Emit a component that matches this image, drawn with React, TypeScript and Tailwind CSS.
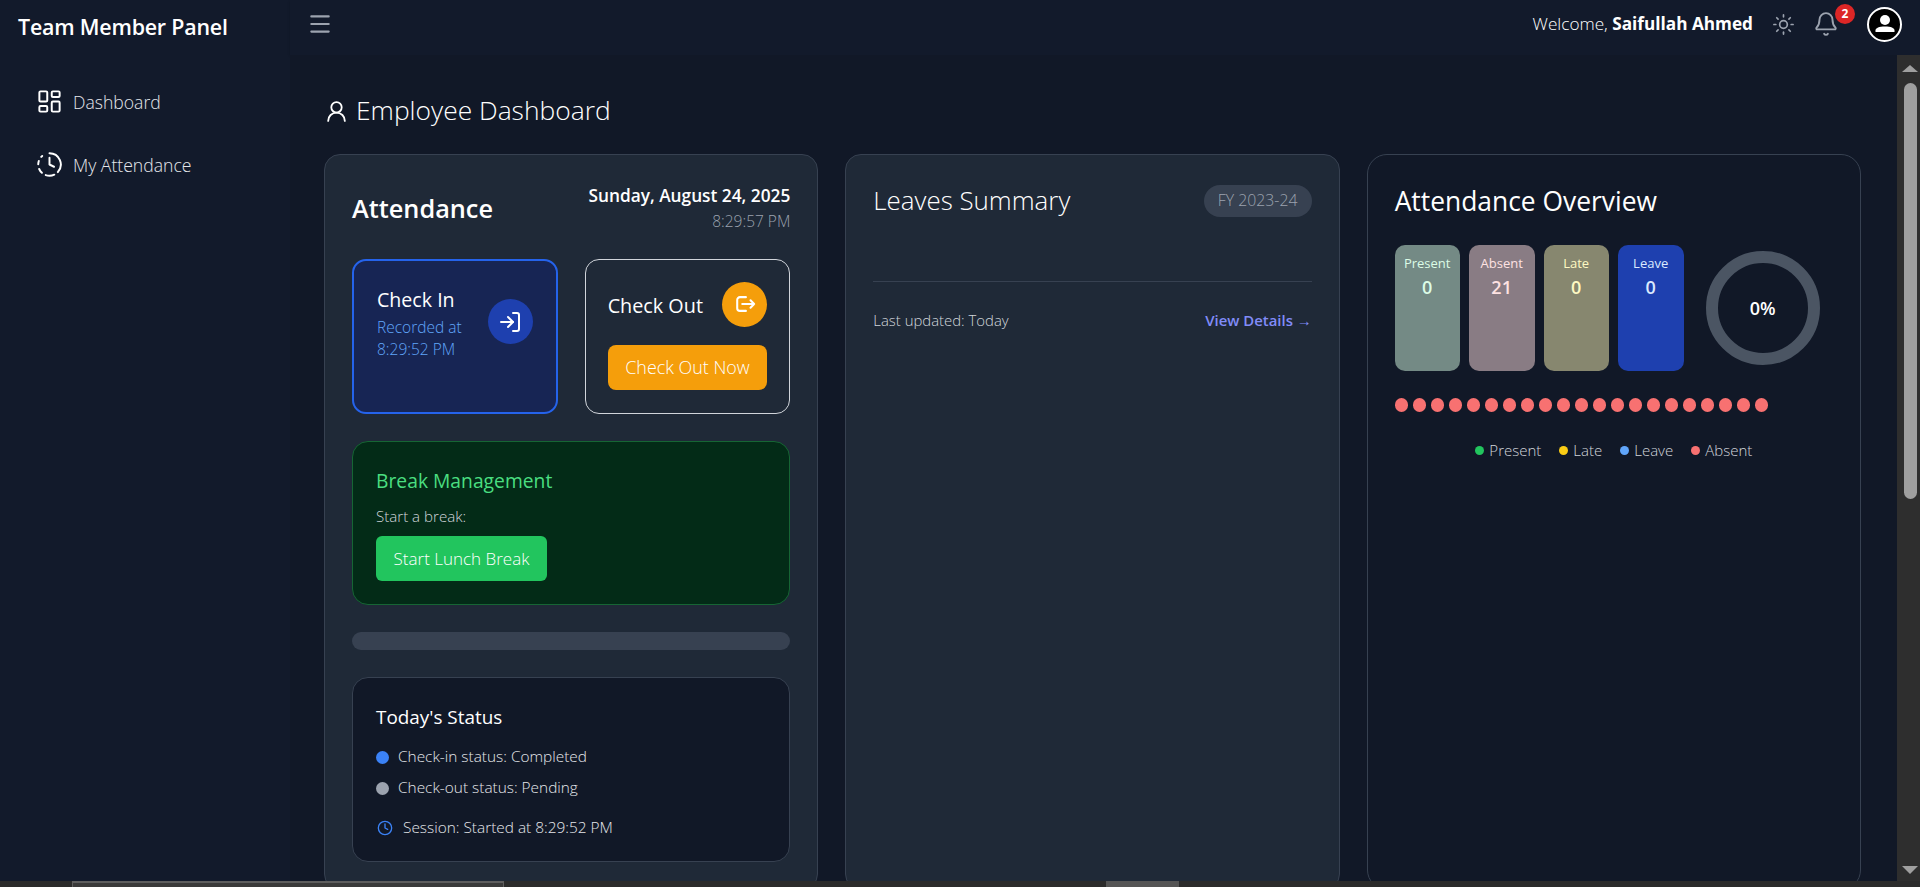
import { Bell, Clock, ClockFading, LayoutDashboard, LogIn, Menu, Sun, UserRound } from 'lucide-react';

const stats = [
  { label: 'Present', value: '0', tile: 'bg-[#748a85] text-[#dcfce7] w-[65px]' },
  { label: 'Absent', value: '21', tile: 'bg-[#897c84] text-[#fee2e2] w-[66px]' },
  { label: 'Late', value: '0', tile: 'bg-[#87876f] text-[#fef9c3] w-[65px]' },
  { label: 'Leave', value: '0', tile: 'bg-[#1e40af] text-[#dbeafe] w-[66px]' },
];

const legend = [
  { label: 'Present', dot: 'bg-[#22c55e]' },
  { label: 'Late', dot: 'bg-[#facc15]' },
  { label: 'Leave', dot: 'bg-[#60a5fa]' },
  { label: 'Absent', dot: 'bg-[#f87171]' },
];

const days = Array.from({ length: 21 }, (_, i) => i);

function Sidebar() {
  return (
    <aside className="w-[290px] shrink-0 bg-[#121a2b]">
      <div className="h-[55px] pl-[18px] pt-[12px] text-[21.4px] leading-[30px] font-semibold text-white tracking-[-0.2px]">
        Team Member Panel
      </div>
      <nav className="pl-[36px] pt-[33px] flex flex-col gap-[36px] text-[17.6px] leading-[26px] font-light text-gray-200">
        <a className="flex items-center gap-[10px]">
          <LayoutDashboard className="w-[27px] h-[27px] text-white" strokeWidth={1.75} />
          Dashboard
        </a>
        <a className="flex items-center gap-[10px]">
          <ClockFading className="w-[27px] h-[27px] text-white" strokeWidth={1.75} />
          My Attendance
        </a>
      </nav>
    </aside>
  );
}

function Header() {
  return (
    <header className="h-[55px] flex items-start justify-between bg-[#121a2b] shadow-sm">
      <Menu className="ml-[17px] mt-[11px] w-[26px] h-[26px] text-[#9ca3af]" strokeWidth={2} />
      <div className="flex items-center h-[48px] pr-[18px]">
        <span className="text-[17.2px] font-light text-white">
          Welcome, <strong className="font-bold">Saifullah Ahmed</strong>
        </span>
        <Sun className="ml-[19px] w-[23px] h-[23px] text-[#9ca3af]" strokeWidth={1.75} />
        <div className="relative ml-[18px] mr-[28px]">
          <Bell className="w-[26px] h-[26px] text-[#9ca3af]" strokeWidth={1.75} />
          <span className="absolute -top-[7px] -right-[16px] w-[20px] h-[20px] rounded-full bg-[#dc2626] text-white text-[12px] font-bold flex items-center justify-center">
            2
          </span>
        </div>
        <div className="w-[35px] h-[35px] rounded-full border-2 border-white bg-black flex items-center justify-center">
          <svg viewBox="0 0 24 24" className="w-[24px] h-[24px] fill-white">
            <circle cx="12" cy="8" r="5" />
            <path d="M2.5 20v-1.5C2.5 16 6 14.5 12 14.5s9.5 1.5 9.5 4V20z" />
          </svg>
        </div>
      </div>
    </header>
  );
}

function AttendanceCard() {
  return (
    <section className="bg-[#1f2937] border border-[#374151] rounded-[16px] px-[27px] pt-[27px] pb-[27px]">
      <div className="flex items-start justify-between">
        <h2 className="text-[25.3px] leading-[34px] font-semibold text-white mt-[9px]">Attendance</h2>
        <div className="text-right">
          <div className="text-[17.3px] leading-[28px] font-semibold text-white">Sunday, August 24, 2025</div>
          <div className="text-[15.5px] leading-[22px] font-light text-[#9ca3af]">8:29:57 PM</div>
        </div>
      </div>

      <div className="grid grid-cols-2 gap-[27px] mt-[27px]">
        <div className="h-[155px] rounded-[14px] border-2 border-[#2563eb] bg-[#172554] pl-[23px] pr-[23px] pt-[24px]">
          <div className="flex items-center justify-between">
            <div>
              <div className="text-[19.6px] leading-[30px] font-medium text-white">Check In</div>
              <div className="mt-[1px] text-[15.5px] leading-[22px] font-light text-[#60a5fa] w-[100px]">Recorded at 8:29:52 PM</div>
            </div>
            <div className="-mt-[2px] w-[45px] h-[45px] rounded-full bg-[#1e40af] flex items-center justify-center">
              <LogIn className="w-[24px] h-[24px] text-white" />
            </div>
          </div>
        </div>

        <div className="h-[155px] rounded-[14px] border border-[#d1d5db] pl-[22px] pr-[22px] pt-[22px]">
          <div className="flex items-center justify-between">
            <span className="mt-[3px] text-[19.8px] font-medium text-white">Check Out</span>
            <div className="w-[45px] h-[45px] rounded-full bg-[#f59e0b] flex items-center justify-center">
              <svg viewBox="0 0 24 24" className="w-[22px] h-[22px] -mt-[1px] fill-none stroke-white stroke-[2.25]" strokeLinecap="round" strokeLinejoin="round">
                <path d="M13 4.5H6.5a3 3 0 0 0-3 3v9a3 3 0 0 0 3 3H13" />
                <path d="M9 12h13M18 8l4 4-4 4" />
              </svg>
            </div>
          </div>
          <button className="mt-[18px] w-full h-[45px] rounded-[8px] bg-[#f59e0b] text-[17.9px] font-light text-white">
            Check Out Now
          </button>
        </div>
      </div>

      <div className="mt-[27px] h-[164px] rounded-[16px] border border-[#166534] bg-[#032b17] px-[23px] pt-[21px]">
        <h3 className="text-[19.3px] leading-[36px] font-medium text-[#4ade80]">Break Management</h3>
        <p className="mt-[6px] text-[15.1px] leading-[22px] font-light text-[#d1d5db]">Start a break:</p>
        <button className="mt-[9px] h-[45px] w-[171px] rounded-[6px] bg-[#22c55e] text-[17px] font-light text-white">
          Start Lunch Break
        </button>
      </div>

      <div className="mt-[27px] h-[18px] rounded-full bg-[#374151]" />

      <div className="mt-[27px] h-[185px] rounded-[16px] border border-[#374151] bg-[#111827] px-[23px] pt-[24px]">
        <h3 className="text-[18.9px] leading-[30px] font-medium text-white">Today's Status</h3>
        <div className="mt-[9px] flex items-center gap-[9px] text-[15.4px] leading-[32px] font-light text-[#e5e7eb]">
          <span className="w-[13px] h-[13px] rounded-full bg-[#3b82f6]" />
          Check-in status: Completed
        </div>
        <div className="flex items-center gap-[9px] text-[15.4px] leading-[30px] font-light text-[#e5e7eb]">
          <span className="w-[13px] h-[13px] rounded-full bg-[#9ca3af]" />
          Check-out status: Pending
        </div>
        <div className="mt-[14px] flex items-center gap-[10px] text-[15.4px] leading-[22px] font-light text-[#e5e7eb]">
          <Clock className="w-[16px] h-[16px] ml-[1px] text-[#3b82f6]" />
          Session: Started at 8:29:52 PM
        </div>
      </div>
    </section>
  );
}

function LeavesCard() {
  return (
    <section className="bg-[#1f2937] border border-[#374151] rounded-[16px] px-[27px] pt-[29px]">
      <div className="flex items-center justify-between h-[33px]">
        <h2 className="text-[25.9px] text-white font-light">Leaves Summary</h2>
        <span className="h-[32px] w-[108px] rounded-full bg-[#374151] text-[15.8px] font-light text-[#9ca3af] flex items-center justify-center">
          FY 2023-24
        </span>
      </div>
      <div className="mt-[64px] border-t border-[#374151] pt-[26px] flex items-center justify-between text-[14.9px] leading-[24px]">
        <span className="font-light text-[#d1d5db]">Last updated: Today</span>
        <a className="font-semibold text-[#818cf8]">View Details →</a>
      </div>
    </section>
  );
}

function OverviewCard() {
  return (
    <section className="bg-[#111827] border border-[#374151] rounded-[20px] px-[27px] pt-[28px]">
      <h2 className="text-[26.4px] leading-[36px] font-medium text-white">Attendance Overview</h2>
      <div className="mt-[26px] flex items-start">
        <div className="flex gap-[9px]">
          {stats.map((s) => (
            <div key={s.label} className={`${s.tile} h-[126px] rounded-[10px] pt-[9px] text-center`}>
              <div className="text-[13px] leading-[18px] font-medium">{s.label}</div>
              <div className="mt-[2px] text-[18px] leading-[26px] font-semibold">{s.value}</div>
            </div>
          ))}
        </div>
        <div className="relative ml-[22px] mt-[6px] w-[114px] h-[114px] rounded-full border-[12px] border-[#4b5563] flex items-center justify-center text-[18px] font-semibold text-white">
          0%
        </div>
      </div>
      <div className="mt-[27px] flex gap-[5px]">
        {days.map((d) => (
          <span key={d} className="w-[13px] h-[14px] rounded-full bg-[#f87171]" />
        ))}
      </div>
      <div className="mt-[27px] flex justify-center gap-[18px] text-[15px] leading-[22px] font-light text-[#d1d5db]">
        {legend.map((l) => (
          <span key={l.label} className="flex items-center gap-[5px]">
            <span className={`w-[9px] h-[9px] rounded-full ${l.dot}`} />
            {l.label}
          </span>
        ))}
      </div>
    </section>
  );
}

function FakeScrollbar() {
  return (
    <div className="w-[23px] shrink-0 bg-[#2e2e2e] flex flex-col items-center justify-between pl-[3px] pt-[10px] pb-[7px]">
      <div className="flex flex-col items-center gap-[11px] w-full">
        <span className="w-0 h-0 border-x-[8px] border-x-transparent border-b-[7px] border-b-[#9f9f9f]" />
        <span className="w-[13px] h-[416px] rounded-full bg-[#9f9f9f]" />
      </div>
      <span className="w-0 h-0 border-x-[8px] border-x-transparent border-t-[8px] border-t-[#9f9f9f]" />
    </div>
  );
}

export default function App() {
  return (
    <div className="h-[887px] w-[1920px] overflow-hidden flex flex-col bg-[#2b2b2b] font-['Open_Sans','Noto_Sans',sans-serif]">
      <div className="h-[881px] flex">
        <Sidebar />
        <div className="flex-1 flex flex-col min-w-0">
          <Header />
          <div className="flex-1 flex min-h-0">
            <main className="flex-1 bg-[#111827] overflow-hidden pl-[34px] pt-[40px]">
              <h1 className="flex items-center gap-[7px] h-[32px] text-[26.4px] font-light text-white">
                <UserRound className="w-[25px] h-[25px] text-white" strokeWidth={1.75} />
                Employee Dashboard
              </h1>
              <div className="mt-[27px] w-[1537px] grid grid-cols-3 gap-[27px]">
                <AttendanceCard />
                <LeavesCard />
                <OverviewCard />
              </div>
            </main>
            <FakeScrollbar />
          </div>
        </div>
      </div>
      <div className="h-[6px] flex bg-[#2b2b2b]">
        <div className="ml-[72px] w-[432px] bg-[#3a3a3a] border-t-2 border-x border-[#5e5e5e]" />
        <div className="ml-[602px] w-[73px] bg-[#555555]" />
      </div>
    </div>
  );
}
